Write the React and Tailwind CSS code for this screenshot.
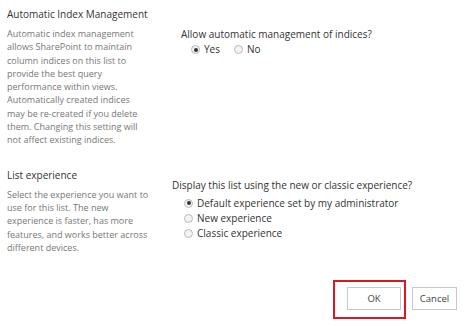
const font = { fontFamily: '"Open Sans", "Noto Sans", sans-serif' };

function Radio({ checked, label }) {
  return (
    <label className="flex items-center gap-[4px] text-[10px] leading-[15px] text-[#333]">
      <span className="flex h-[9px] w-[9px] items-center justify-center rounded-full border border-[#b8b8b8] bg-[#f3f3f3]">
        {checked && <span className="h-[4px] w-[4px] rounded-full bg-[#333]" />}
      </span>
      {label}
    </label>
  );
}

// lines are given one by one so they wrap as in the original
function Section({ title, children, lines, className }) {
  return (
    <div className={'flex ' + className}>
      <div className="w-[165px] shrink-0 pl-[7px]">
        <div className="text-[10px] leading-[14px] text-[#333]">{title}</div>
        <div className="mt-[6px] text-[9px] leading-[13.3px] text-[#777]">
          {lines.map((l, i) => (
            <div key={i} className="whitespace-nowrap">{l}</div>
          ))}
        </div>
      </div>
      {children}
    </div>
  );
}

export default function App() {
  return (
    <div className="h-[326px] w-[476px] overflow-hidden bg-white" style={font}>
      <Section
        className="pt-[7px]"
        title="Automatic Index Management"
        lines={[
          'Automatic index management',
          'allows SharePoint to maintain',
          'column indices on this list to',
          'provide the best query',
          'performance within views.',
          'Automatically created indices',
          'may be re-created if you delete',
          'them. Changing this setting will',
          'not affect existing indices.',
        ]}
      >
        <div className="pl-[16px] pt-[20px]">
          <div className="text-[10px] leading-[14px] text-[#333]">Allow automatic management of indices?</div>
          <div className="mt-[1px] flex gap-[14px] pl-[10px]">
            <Radio checked label="Yes" />
            <Radio label="No" />
          </div>
        </div>
      </Section>

      <Section
        className="mt-[21px]"
        title="List experience"
        lines={[
          'Select the experience you want to',
          'use for this list. The new',
          'experience is faster, has more',
          'features, and works better across',
          'different devices.',
        ]}
      >
        <div className="pl-[7px] pt-[10px]">
          <div className="text-[10px] leading-[14px] text-[#333]">Display this list using the new or classic experience?</div>
          <div className="mt-[4px] flex flex-col pl-[12px]">
            <Radio checked label="Default experience set by my administrator" />
            <Radio label="New experience" />
            <Radio label="Classic experience" />
          </div>
        </div>
      </Section>

      <div className="mt-[26px] flex items-start justify-end gap-[6px] pr-[19px]">
        <div className="border-[2px] border-[#d9181f] pb-[7px] pl-[12px] pr-[3px] pt-[5px]">
          <button className="block h-[23px] w-[54px] border border-[#c8c8c8] bg-white text-[9.5px] text-[#444]">OK</button>
        </div>
        <button className="mt-[7px] h-[23px] w-[45px] border border-[#c8c8c8] bg-white text-[9.5px] text-[#444]">Cancel</button>
      </div>
    </div>
  );
}
